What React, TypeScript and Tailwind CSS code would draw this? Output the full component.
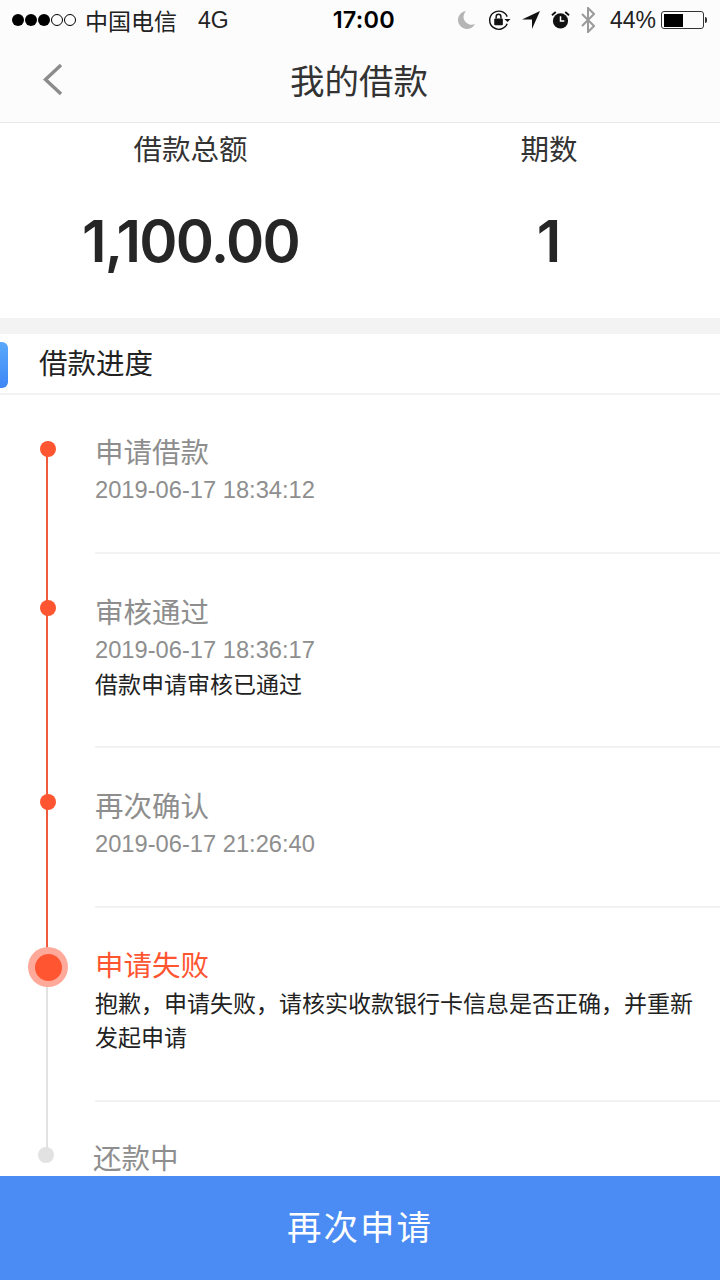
import React from 'react';

const cjk = '"Noto Sans CJK SC", sans-serif';

function StatusBar() {
  return (
    <div className="flex h-10 items-center bg-[#fcfcfc] pl-3 pr-[13px] text-[23px] text-[#222]">
      <div className="flex items-center gap-[1px]">
        {[0, 1, 2].map((i) => (
          <span key={i} className="h-[12px] w-[12px] rounded-full bg-black" />
        ))}
        {[0, 1].map((i) => (
          <span key={i} className="h-[12px] w-[12px] rounded-full border border-black" />
        ))}
      </div>
      <span className="ml-[9px] w-[92px] whitespace-nowrap text-[23px] leading-none">中国电信</span>
      <span className="ml-[21px] font-['Liberation_Sans'] text-[23px] leading-none">4G</span>
      <span className="ml-[104px] font-['Inter'] text-[23.5px] font-semibold leading-none tracking-[0.2px] text-black">17:00</span>
      <div className="ml-auto flex items-center">
        <svg width="18" height="20" viewBox="0 0 18 20" fill="#b5b5b5" className="mr-[12px]">
          <path d="M8 1a9 9 0 1 0 9 13 8 8 0 0 1-9-13z" />
        </svg>
        <svg width="23" height="22" viewBox="0 0 24 22" fill="none" className="mr-[11px]">
          <path d="M20 7.5A9.5 9.5 0 1 0 20 15" stroke="#111" strokeWidth="1.5" />
          <path d="M17 10l3.5 3 3-3z" fill="#111" />
          <rect x="6.5" y="9.5" width="9" height="7" rx="1" fill="#111" />
          <path d="M8.5 9.5V7.5a2.5 2.5 0 0 1 5 0v2" stroke="#111" strokeWidth="1.5" />
        </svg>
        <svg width="18" height="18" viewBox="0 0 18 18" fill="#111" className="mr-[11px]">
          <path d="M18 0 10 18V8.5H0z" />
        </svg>
        <svg width="19" height="20" viewBox="0 0 20 20" fill="#111" className="mr-[11px]">
          <circle cx="10" cy="11" r="8" />
          <path d="M10 6v5h4" stroke="#fff" strokeWidth="1.6" fill="none" />
          <path d="M1 5l4-3.5M19 5l-4-3.5" stroke="#111" strokeWidth="2" />
        </svg>
        <svg width="14" height="26" viewBox="0 0 14 26" fill="none" stroke="#9a9a9a" strokeWidth="2" className="mr-[15px]">
          <path d="M1 7l12 12-6 6V1l6 6L1 19" />
        </svg>
        <span className="font-['Liberation_Sans'] text-[23px] leading-none">44%</span>
        <div className="ml-[5px] flex items-center">
          <div className="h-[18px] w-[43px] rounded-[3px] border border-[#333] p-[1.5px]">
            <div className="h-full w-[19px] bg-black" />
          </div>
          <div className="ml-[1px] h-[6px] w-[2px] rounded-r-full bg-[#333]" />
        </div>
      </div>
    </div>
  );
}

function Step({
  height,
  title,
  titleClass = '',
  time,
  note,
  top,
  kind,
  lineAbove,
  lineBelow,
  divider = true,
}: {
  height: string;
  title: string;
  titleClass?: string;
  time?: string;
  note?: string;
  top: string;
  kind: 'done' | 'fail' | 'todo';
  lineAbove?: string;
  lineBelow?: string;
  divider?: boolean;
}) {
  return (
    <div className={`relative flex ${height}`}>
      {lineAbove && <div className={`absolute left-[46px] top-0 w-[2px] ${lineAbove}`} />}
      {lineBelow && <div className={`absolute bottom-0 left-[46px] w-[2px] ${lineBelow}`} />}
      <div className="w-[95px] shrink-0" />
      <div className={`flex-1 pr-[20px] ${divider ? 'relative after:absolute after:bottom-0 after:left-0 after:h-[2px] after:w-[625px] after:bg-[#f2f2f2]' : ''} ${top}`}>
        <div className={`text-[28.5px] leading-[36px] ${titleClass} ${kind === 'fail' ? 'text-[#ff5530]' : 'text-[#8e8e8e]'}`}>{title}</div>
        {time && <div className="mt-[4px] font-['Liberation_Sans'] text-[23.7px] leading-[34px] text-[#8e8e8e]">{time}</div>}
        {note && <div className={`text-[23px] leading-[34px] text-[#222] ${time ? '-mt-[1px]' : 'mt-[3px]'}`}>{note}</div>}
      </div>
    </div>
  );
}

export default function App() {
  return (
    <div className="relative h-[1280px] w-[720px] overflow-hidden bg-white" style={{ fontFamily: cjk }}>
      <StatusBar />

      <div className="relative flex h-[83px] items-center justify-center border-b border-[#e8e8e8] bg-[#fcfcfc] pb-[3px] pr-[2px]">
        <svg width="22" height="34" viewBox="0 0 22 34" fill="none" stroke="#8c8c8c" strokeWidth="3.4" className="absolute left-[42px] top-[23px]">
          <path d="M19 2 3.5 16.5 19 31" />
        </svg>
        <span className="text-[34.5px] leading-none text-[#333]">我的借款</span>
      </div>

      <div className="flex h-[211px] border-b-[16px] border-[#f3f3f3]">
        <div className="w-[381px] text-center">
          <div className="mt-[5px] text-[28.5px] leading-[40px] text-[#333]">借款总额</div>
          <div className="mt-[38px] font-['Inter'] text-[58px] font-semibold leading-[70px] tracking-[-1.7px] text-[#262626]">1,100.00</div>
        </div>
        <div className="w-[336px] text-center">
          <div className="mt-[5px] text-[28.5px] leading-[40px] text-[#333]">期数</div>
          <div className="mt-[38px] font-['Inter'] text-[58px] font-semibold leading-[70px] text-[#262626]">1</div>
        </div>
      </div>

      <div className="relative flex h-[61px] items-center border-b-2 border-[#f2f2f2] pb-[2px] pl-[39px]">
        <div className="absolute left-0 top-[8px] h-[46px] w-2 rounded-r-[6px] bg-gradient-to-b from-[#5aa9fb] to-[#3f86f5]" />
        <span className="text-[28.5px] leading-none text-[#222]">借款进度</span>
      </div>

      <div className="relative">
        <Step height="h-[159px]" top="pt-[38px]" kind="done" title="申请借款" time="2019-06-17 18:34:12" lineBelow="top-[54px] bg-[#f0593b]" />
        <Step height="h-[194px]" top="pt-[39px]" kind="done" title="审核通过" time="2019-06-17 18:36:17" note="借款申请审核已通过" lineAbove="bottom-0 bg-[#f0593b]" />
        <Step height="h-[160px]" top="pt-[39px]" kind="done" title="再次确认" time="2019-06-17 21:26:40" lineAbove="bottom-0 bg-[#f0593b]" />
        <Step
          height="h-[194px]"
          top="pt-[38px]"
          kind="fail"
          title="申请失败"
          note="抱歉，申请失败，请核实收款银行卡信息是否正确，并重新发起申请"
          lineAbove="h-[60px] bg-[#f0593b]"
          lineBelow="top-[60px] bg-[#e2e2e2]"
        />
        <Step height="h-[80px]" top="pt-[37px]" titleClass="-ml-[2px]" kind="todo" title="还款中" divider={false} lineAbove="h-[50px] bg-[#e2e2e2]" />

        <span className="absolute left-[40px] top-[46px] h-4 w-4 rounded-full bg-[#ff5530]" />
        <span className="absolute left-[40px] top-[205px] h-4 w-4 rounded-full bg-[#ff5530]" />
        <span className="absolute left-[40px] top-[399px] h-4 w-4 rounded-full bg-[#ff5530]" />
        <span className="absolute left-[28px] top-[552px] flex h-10 w-10 items-center justify-center rounded-full bg-[#ffa99a]">
          <span className="h-[27px] w-[27px] rounded-full bg-[#ff5530]" />
        </span>
        <span className="absolute left-[38px] top-[752px] h-4 w-4 rounded-full bg-[#e2e2e2]" />
      </div>

      <div className="absolute bottom-0 left-0 flex h-[104px] w-full items-center justify-center bg-[#4a8cf3] pb-[5px] text-[34.5px] tracking-[2px] text-white">
        再次申请
      </div>
    </div>
  );
}
